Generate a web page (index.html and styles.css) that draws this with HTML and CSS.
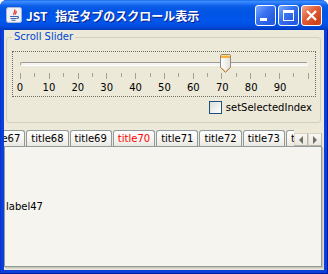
FILE: index.html
```html
<html lang="ja">
<head>
    <meta charset="UTF-8">
    <title>JST 指定タブのスクロール表示</title>
    <link rel="stylesheet" href="styles.css">
</head>
<body>
<div class="window">
    <div class="titlebar">
        <svg class="app-icon" width="16" height="16" viewBox="0 0 16 16">
            <rect x="0.5" y="0.5" width="15" height="15" rx="2" fill="#EEF2F8" stroke="#A9B7D3"/>
            <path d="M8.5 2.5 C10.5 4.5 6.5 5.5 8 8 M10 4 C11 5.5 9 6 9.5 7.5" stroke="#E0301E" stroke-width="1.2" fill="none"/>
            <path d="M4 9.5 H11 M4.5 11.5 H10.5 M5.5 13.2 H9.5 M11 9.5 C13 9.5 13 11.5 10.8 11.5" stroke="#3E64A8" stroke-width="1.1" fill="none"/>
        </svg>
        <span class="title">JST 指定タブのスクロール表示</span>
        <div class="controls">
            <span class="btn min"></span>
            <span class="btn max"></span>
            <span class="btn close">
                <svg width="19" height="19" viewBox="0 0 19 19">
                    <path d="M5 5 L14 14 M14 5 L5 14" stroke="#fff" stroke-width="2.2"/>
                </svg>
            </span>
        </div>
    </div>

    <div class="client">
        <fieldset class="group">
            <legend>Scroll Slider</legend>
            <div class="slider">
                <div class="track"></div>
                <svg class="thumb" width="11" height="19" viewBox="0 0 11 19">
                    <defs>
                        <linearGradient id="thumbFill" x1="0" y1="0" x2="1" y2="0">
                            <stop offset="0" stop-color="#FFFFFF"/>
                            <stop offset="1" stop-color="#E2E1DA"/>
                        </linearGradient>
                    </defs>
                    <path d="M1.5 0.5 H9.5 Q10.5 0.5 10.5 1.5 V13.5 L5.5 18.5 L0.5 13.5 V1.5 Q0.5 0.5 1.5 0.5 Z" fill="url(#thumbFill)" stroke="#8C8B83"/>
                    <rect x="1" y="1" width="9" height="3" fill="#F8B03F"/>
                    <rect x="1" y="1" width="9" height="1" fill="#FFD874"/>
                    <path d="M1.5 13.8 L5.5 17.6 L9.5 13.8" stroke="#F3A53A" fill="none"/>
                </svg>
                <div class="ticks">
                    <i class="major"></i><i></i><i class="major"></i><i></i>
                    <i class="major"></i><i></i><i class="major"></i><i></i>
                    <i class="major"></i><i></i><i class="major"></i><i></i>
                    <i class="major"></i><i></i><i class="major"></i><i></i>
                    <i class="major"></i><i></i><i class="major"></i><i></i>
                    <i class="major"></i>
                </div>
                <div class="labels">
                    <span>0</span><span>10</span><span>20</span><span>30</span><span>40</span>
                    <span>50</span><span>60</span><span>70</span><span>80</span><span>90</span>
                </div>
            </div>
            <label class="check-row"><span class="check"></span>setSelectedIndex</label>
        </fieldset>

        <div class="tabs">
            <div class="tab-strip">
                <div class="tab-list">
                    <span class="tab first">title67</span>
                    <span class="tab">title68</span>
                    <span class="tab">title69</span>
                    <span class="tab red">title70</span>
                    <span class="tab">title71</span>
                    <span class="tab">title72</span>
                    <span class="tab">title73</span>
                    <span class="tab">title74</span>
                </div>
            </div>
            <div class="tab-arrows">
                <span class="arrow"><i class="left"></i></span>
                <span class="arrow"><i class="right"></i></span>
            </div>
        </div>
        <div class="tab-panel">
            <span class="panel-label">label47</span>
        </div>
    </div>
</div>
</body>
</html>
```

FILE: styles.css
```css
body {
    margin: 0;
    background-color: #fff;
    font-family: "DejaVu Sans", sans-serif;
    font-size: 10px;
    color: #000;
}

.window {
    width: 328px;
    height: 274px;
    display: flex;
    flex-direction: column;
    background-color: #0A3FDC;
    border-radius: 7px 7px 0 0;
    box-shadow: inset -1px -1px #001C9A, inset 1px 0 #0834C8;
    overflow: hidden;
}

/* title bar */
.titlebar {
    height: 30px;
    flex: none;
    display: flex;
    align-items: center;
    background: linear-gradient(to bottom, #0B5BE6 0px, #3E8FFC 1px, #2D7DFB 3px, #0A5DE8 6px, #0054E3 12px, #0157ED 20px, #0150E4 25px, #0143D0 28px, #0038BC 30px);
}

.app-icon {
    margin-left: 6px;
    flex: none;
}

.title {
    margin-left: 4px;
    color: #fff;
    font-family: "Noto Sans CJK JP", sans-serif;
    font-weight: bold;
    font-size: 12px;
    word-spacing: 5px;
    text-shadow: 1px 1px #0A1E8A;
    white-space: nowrap;
}

.controls {
    margin-left: auto;
    margin-right: 6px;
    display: flex;
    gap: 2px;
}

.btn {
    width: 21px;
    height: 21px;
    box-sizing: border-box;
    border: 1px solid #fff;
    border-radius: 3px;
    position: relative;
    background: linear-gradient(135deg, #7AAAFF 0%, #3A73F0 40%, #245BE0 80%, #2A5FE4 100%);
}

.btn.min::after {
    content: '';
    position: absolute;
    left: 4px;
    top: 12px;
    width: 7px;
    height: 3px;
    background-color: #fff;
}

.btn.max::after {
    content: '';
    position: absolute;
    left: 4px;
    top: 4px;
    width: 9px;
    height: 7px;
    border: 1px solid #fff;
    border-top-width: 3px;
}

.btn.close {
    background: linear-gradient(135deg, #F3A68E 0%, #E2613B 40%, #CF431B 80%, #D24C24 100%);
}

.btn.close svg {
    display: block;
}

/* client area */
.client {
    flex: 1;
    margin: 0 4px 4px 4px;
    background-color: #ECE9D8;
    display: flex;
    flex-direction: column;
}

.group {
    margin: 1px 3px 0 2px;
    padding: 8px 4px 8px 5px;
    border: 1px solid #D0D0BF;
    border-radius: 3px;
    min-width: 0;
}

.group legend {
    padding: 0 2px;
    color: #0046D5;
    line-height: 12px;
}

.slider {
    position: relative;
    height: 46px;
    box-sizing: border-box;
    border: 1px dotted #6E6D66;
    padding-top: 10px;
}

.track {
    margin-left: 7px;
    width: 288px;
    height: 4px;
    box-sizing: border-box;
    border-top: 1px solid #9F9E96;
    border-left: 1px solid #9F9E96;
    border-right: 1px solid #fff;
    border-bottom: 1px solid #fff;
    border-radius: 2px;
    background-color: #F4F3EF;
}

.thumb {
    position: absolute;
    left: 207px;
    top: 2px;
}

.ticks {
    margin: 7px 0 0 7px;
    width: 289px;
    height: 6px;
    display: flex;
    justify-content: space-between;
    align-items: flex-start;
}

.ticks i {
    width: 1px;
    height: 4px;
    background-color: #A3A195;
}

.ticks i.major {
    height: 6px;
}

.labels {
    margin: 3px 0 0 -7.45px;
    display: flex;
    line-height: 12px;
}

.labels span {
    width: 28.9px;
    flex: none;
    text-align: center;
}

.check-row {
    margin-top: 4px;
    display: flex;
    justify-content: flex-end;
    align-items: center;
    gap: 4px;
    padding-right: 4px;
    height: 13px;
    line-height: 13px;
}

.check {
    width: 13px;
    height: 13px;
    box-sizing: border-box;
    border: 1px solid #1C5180;
    background: linear-gradient(135deg, #DCDCD7 0%, #F2F2EF 60%, #FFFFFF 100%);
}

/* tabs */
.tabs {
    margin-top: 7px;
    height: 16px;
    display: flex;
    flex: none;
}

.tab-strip {
    flex: 1;
    overflow: hidden;
}

.tab-list {
    display: flex;
    gap: 1px;
    white-space: nowrap;
}

.tab {
    flex: none;
    height: 16px;
    box-sizing: border-box;
    padding: 0 4px;
    line-height: 15px;
    border: 1px solid #919B9C;
    border-bottom: none;
    border-radius: 3px 3px 0 0;
    background: linear-gradient(to bottom, #FFFFFF, #F2F1EC 70%, #E8E7E0);
}

.tab.first {
    margin-left: -21px;
}

.tab.red {
    color: #F00;
}

.tab-arrows {
    align-self: flex-end;
    display: flex;
    margin-right: 2px;
}

.arrow {
    width: 14px;
    height: 13px;
    box-sizing: border-box;
    border: 1px solid #D8D5C6;
    border-right-color: #B9B6A6;
    border-bottom-color: #B9B6A6;
    background: linear-gradient(to bottom, #F8F7F3, #E9E7DD);
    display: flex;
    align-items: center;
    justify-content: center;
}

.arrow i {
    width: 0;
    height: 0;
    border-top: 4px solid transparent;
    border-bottom: 4px solid transparent;
}

.arrow i.left {
    border-right: 4px solid #6F6E66;
}

.arrow i.right {
    border-left: 4px solid #6F6E66;
}

.tab-panel {
    flex: 1;
    margin: 0 2px 3px 0;
    border: 1px solid #919B9C;
    background-color: #F5F4EF;
    box-shadow: 1px 1px #C6C4B5, 2px 2px #DCDACB;
    display: flex;
    align-items: center;
    padding-left: 1px;
}
```
